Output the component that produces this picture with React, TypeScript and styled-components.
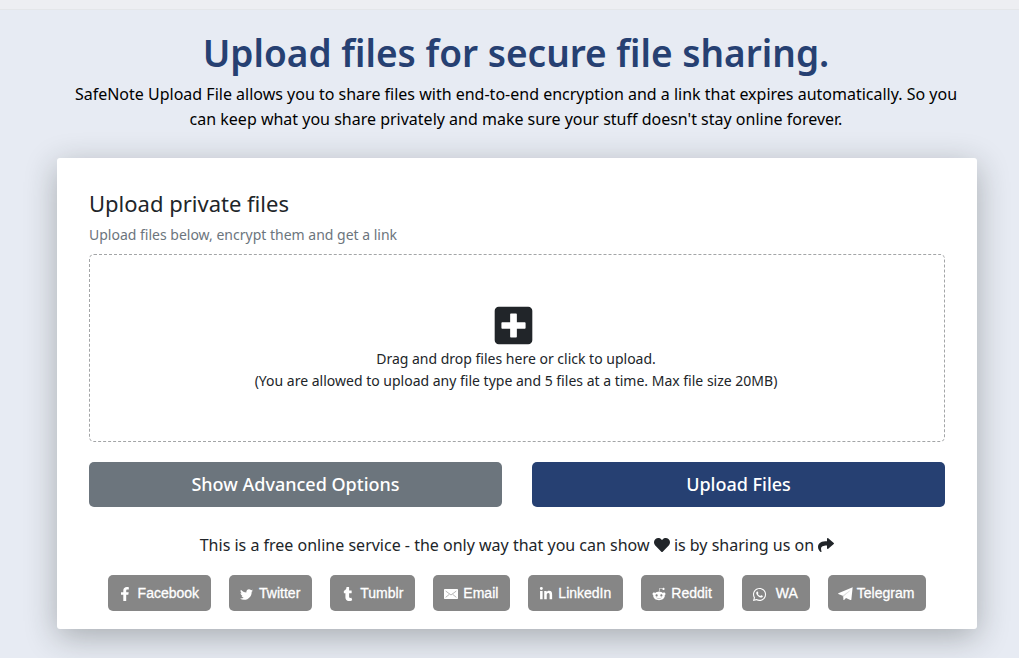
import React from 'react';
import styled, { createGlobalStyle } from 'styled-components';
import { FaHeart, FaLinkedinIn, FaPlusSquare, FaRedditAlien, FaShare, FaTumblr, FaTwitter, FaWhatsapp } from 'react-icons/fa';

const GlobalStyle = createGlobalStyle`
  *, *::before, *::after { box-sizing: border-box; }
  body {
    margin: 0;
    background: #e7ebf3;
    color: #212529;
    font-family: "Noto Sans", sans-serif;
    font-size: 16px;
    line-height: 25px;
  }
  h1, h2, p { margin: 0; }
`;

const TopBar = styled.header`
  height: 10px;
  background: #edeef2;
  border-bottom: 1px solid #e4e6e9;
`;

const Page = styled.main`
  padding: 20px 42px 29px 57px;
`;

const Intro = styled.section`
  padding: 0 12px 0 10px;
  color: #000;
  text-align: center;
`;

const Title = styled.h1`
  margin-bottom: 6px;
  color: #264072;
  font-size: 37px;
  font-weight: 600;
  line-height: 46px;
`;

const Card = styled.section`
  margin-top: 26px;
  padding: 32px 32px 18px;
  border-radius: 3px;
  background: #fff;
  box-shadow: 0 8px 32px rgba(33, 41, 37, 0.32);
`;

const CardTitle = styled.h2`
  font-size: 22px;
  font-weight: 400;
  line-height: 26px;
`;

const Hint = styled.p`
  margin: 8px 0;
  color: #6c757d;
  font-size: 14px;
  line-height: 22px;
`;

const DropZone = styled.button`
  display: flex;
  flex-direction: column;
  align-items: center;
  justify-content: center;
  width: 100%;
  min-height: 188px;
  padding: 0 2px 0 0;
  border: 1px dashed #a3a5a7;
  border-radius: 5px;
  background: #fff;
  color: #212529;
  font: 14px/22px "Noto Sans", sans-serif;
  cursor: pointer;

  svg { margin: 0 5px 1px 0; }
`;

const Actions = styled.div`
  display: grid;
  grid-template-columns: 1fr 1fr;
  gap: 30px;
  margin-top: 20px;
`;

const ActionButton = styled.button<{ $tone: string }>`
  height: 45px;
  border: 0;
  border-radius: 5px;
  background: ${({ $tone }) => $tone};
  color: #fff;
  font: 500 18px/27px "Noto Sans", sans-serif;
  cursor: pointer;
`;

const ShareNote = styled.p`
  margin: 26px 0 17px;
  text-align: center;

  svg { vertical-align: -2px; }
`;

const ShareList = styled.nav`
  display: flex;
  flex-wrap: wrap;
  justify-content: center;
  gap: 18px;
`;

const ShareLink = styled.a`
  display: flex;
  align-items: center;
  height: 36px;
  padding: 0 12px 0 10px;
  border-radius: 5px;
  background: #868686;
  color: #fff;
  font: 14px/20px "Liberation Sans", Arial, sans-serif;
  -webkit-text-stroke: 0.3px #fff;
  text-decoration: none;
`;

const IconSlot = styled.span<{ $gap: number }>`
  display: flex;
  justify-content: center;
  width: 15px;
  margin-right: ${({ $gap }) => $gap}px;
  padding-top: 2px;
  -webkit-text-stroke: 0;

  svg { flex: none; }
`;

const FacebookIcon = () => (
  <svg width="8" height="14" viewBox="0 0 8 14" fill="currentColor" aria-hidden="true">
    <path d="M5.2 14V7.7h2.1l.4-2.5H5.2V3.9c0-.8.3-1.3 1.3-1.3h1.3V.2C7.4.1 6.7 0 5.9 0 3.7 0 2.3 1.3 2.3 3.6v1.6H0v2.5h2.3V14z" />
  </svg>
);

const MailIcon = () => (
  <svg width="14" height="14" viewBox="0 0 42 42" fill="none" aria-hidden="true">
    <rect x="0" y="6" width="42" height="30" rx="2" fill="currentColor" />
    <path d="M5 12l16 12 16-12M5 31l11-9M37 31l-11-9" stroke="#868686" strokeWidth="1.8" />
  </svg>
);

const TelegramIcon = () => (
  <svg width="15" height="14" viewBox="0 0 45 42" fill="currentColor" aria-hidden="true">
    <path d="M44 1L1 19q-1 1 0 2l13 5L38 9 18 27l-2 11q1 2 3 0l5-5 13 6q2 1 3-1z" />
    <path d="M14 25L38 8 19 28l-3 10z" fillOpacity="0.7" />
  </svg>
);

const shares = [
  { name: 'Facebook', icon: <FacebookIcon />, gap: 5 },
  { name: 'Twitter', icon: <FaTwitter size={13} />, gap: 5 },
  { name: 'Tumblr', icon: <FaTumblr size={14} />, gap: 5 },
  { name: 'Email', icon: <MailIcon />, gap: 5 },
  { name: 'LinkedIn', icon: <FaLinkedinIn size={14} />, gap: 5 },
  { name: 'Reddit', icon: <FaRedditAlien size={14} />, gap: 5 },
  { name: 'WA', icon: <FaWhatsapp size={15} />, gap: 9 },
  { name: 'Telegram', icon: <TelegramIcon />, gap: 4 },
];

export default function App() {
  return (
    <>
      <GlobalStyle />
      <TopBar />
      <Page>
        <Intro>
          <Title>Upload files for secure file sharing.</Title>
          <p>
            SafeNote Upload File allows you to share files with end-to-end encryption and a link that expires
            automatically. So you can keep what you share privately and make sure your stuff doesn't stay online
            forever.
          </p>
        </Intro>
        <Card>
          <CardTitle>Upload private files</CardTitle>
          <Hint>Upload files below, encrypt them and get a link</Hint>
          <DropZone type="button">
            <FaPlusSquare size={43} />
            <span>Drag and drop files here or click to upload.</span>
            <span>(You are allowed to upload any file type and 5 files at a time. Max file size 20MB)</span>
          </DropZone>
          <Actions>
            <ActionButton type="button" $tone="#6c757d">Show Advanced Options</ActionButton>
            <ActionButton type="button" $tone="#264072">Upload Files</ActionButton>
          </Actions>
          <ShareNote>
            This is a free online service - the only way that you can show <FaHeart /> is by sharing us on <FaShare />
          </ShareNote>
          <ShareList aria-label="Share">
            {shares.map(({ name, icon, gap }) => (
              <ShareLink key={name} href="#">
                <IconSlot $gap={gap}>{icon}</IconSlot>
                {name}
              </ShareLink>
            ))}
          </ShareList>
        </Card>
      </Page>
    </>
  );
}
